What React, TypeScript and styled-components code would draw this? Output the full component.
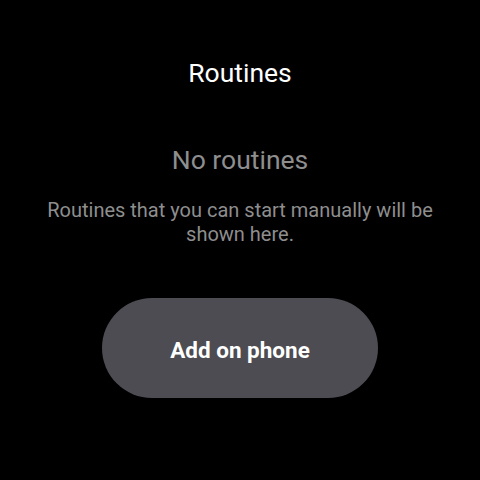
import React from "react";
import styled, { createGlobalStyle } from "styled-components";

const GlobalStyle = createGlobalStyle`
  html, body {
    margin: 0;
    padding: 0;
    background: #000;
  }
  body {
    font-family: Roboto, "Noto Sans", sans-serif;
  }
`;

const Screen = styled.main`
  width: 480px;
  height: 480px;
  box-sizing: border-box;
  background: #000;
  display: flex;
  flex-direction: column;
  align-items: center;
  padding-top: 57px;
`;

const Title = styled.h1`
  margin: 0;
  font-size: 26.5px;
  font-weight: 400;
  line-height: 32px;
  color: #ffffff;
`;

const EmptyHeading = styled.h2`
  margin: 55px 0 0;
  font-size: 26.5px;
  font-weight: 400;
  line-height: 32px;
  color: #8e8e8e;
`;

const EmptyText = styled.p`
  margin: 22px 0 0;
  width: 420px;
  text-align: center;
  font-size: 20px;
  line-height: 24px;
  color: #8e8e8e;
`;

const PillButton = styled.button`
  margin-top: 52px;
  width: 276px;
  height: 100px;
  padding: 3px 0 0;
  border: none;
  border-radius: 50px;
  background: #4d4c52;
  color: #ffffff;
  font-family: Roboto, "Noto Sans", sans-serif;
  font-size: 22.5px;
  font-weight: 700;
  cursor: pointer;
`;

export default function App() {
  return (
    <>
      <GlobalStyle />
      <Screen>
        <Title>Routines</Title>
        <EmptyHeading>No routines</EmptyHeading>
        <EmptyText>Routines that you can start manually will be shown here.</EmptyText>
        <PillButton>Add on phone</PillButton>
      </Screen>
    </>
  );
}
